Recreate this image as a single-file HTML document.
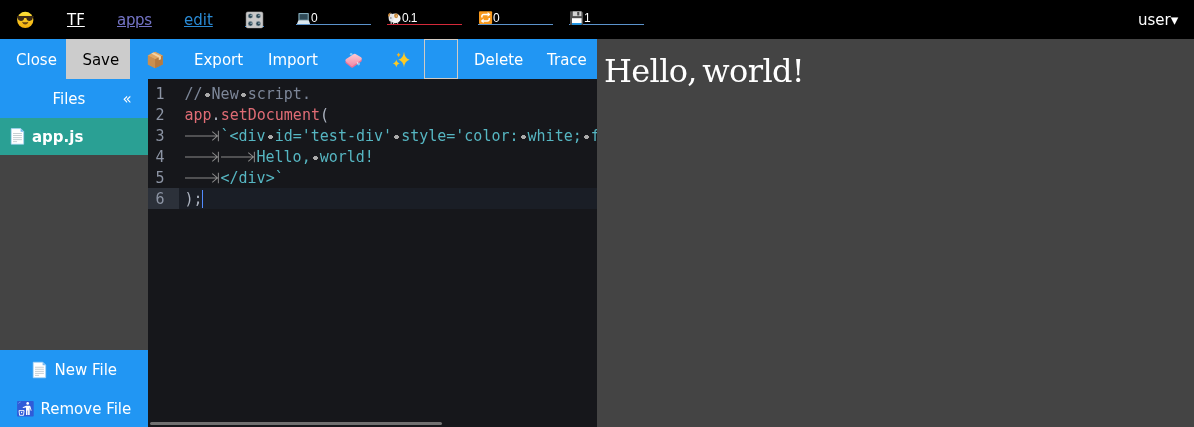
<!DOCTYPE html>
<html><head><meta charset="utf-8">
<style>
html,body{margin:0;padding:0;}
html{background:#000;}
body{will-change:transform;width:1194px;height:427px;overflow:hidden;background:#000;position:relative;font-family:"DejaVu Sans","Liberation Sans",sans-serif;font-size:15px;line-height:22.5px;color:#fff;}
.abs{position:absolute;}
svg{position:absolute;overflow:visible;}
#top{left:0;top:0;width:1194px;height:39px;background:#000;}
#top .t{position:absolute;top:9px;white-space:nowrap;}
#top .s{position:absolute;top:11px;height:13px;width:75px;border-bottom:1px solid #5b93cc;font-family:"Liberation Sans",sans-serif;font-size:12px;line-height:14px;letter-spacing:-0.6px;}
#top .s span{position:absolute;top:0;}
#tool{left:0;top:39px;width:597px;height:40px;background:#2196F3;}
#tool .b{position:absolute;top:3px;height:37px;line-height:37px;white-space:nowrap;}
#right{left:597px;top:39px;width:597px;height:388px;background:#444;}
#hello{position:absolute;left:7px;top:12px;font-family:"DejaVu Serif","Liberation Serif",serif;font-size:32px;letter-spacing:-0.65px;word-spacing:-4px;line-height:40px;color:#fff;white-space:nowrap;}
#side{left:0;top:79px;width:148px;height:348px;background:#444;}
#ed{left:148px;top:79px;width:449px;height:348px;background:#16171b;overflow:hidden;font-family:"DejaVu Sans Mono","Liberation Mono",monospace;font-size:15px;line-height:21px;}
.ln{position:absolute;left:0;height:21px;width:449px;white-space:pre;}
.num{position:absolute;left:7.5px;top:1px;color:#8c94a4;}
.code{position:absolute;left:36.5px;top:1px;}
.ws{background-image:radial-gradient(circle at 50% 55%,#aaa 20%,transparent 5%);background-position:center;}
.tab{display:inline-block;width:36px;height:17.46px;vertical-align:top;margin-top:0.77px;position:relative;}
.tab svg{left:0;top:0;overflow:hidden;}
.c-com{color:#7d8799;}
.c-red{color:#e06c75;}
.c-str{color:#56b6c2;}
.c-pun{color:#abb2bf;}
</style></head><body>
<div id="top" class="abs">
 <span class="t" style="left:67px;text-decoration:underline;">TF</span>
 <span class="t" style="left:117px;text-decoration:underline;color:#7474c6;letter-spacing:-0.3px;">apps</span>
 <span class="t" style="left:184px;text-decoration:underline;color:#2a8ad4;">edit</span>
 <div class="abs" style="left:245px;top:26px;width:19px;height:1px;background:#2389e0;"></div>
 <div class="s" style="left:296px;"><span style="left:15px;">0</span></div>
 <div class="s" style="left:387px;border-bottom-color:#d42a3a;"><span style="left:15px;">0.1</span></div>
 <div class="s" style="left:478px;"><span style="left:15px;">0</span></div>
 <div class="s" style="left:569px;"><span style="left:15px;">1</span></div>
 <span class="t" style="left:1138px;">user▾</span>
</div>
<div id="tool" class="abs">
 <span class="b" style="left:16px;">Close</span>
 <span class="abs" style="left:66px;top:0;width:64px;height:40px;background:#ccc;"></span>
 <span class="b" style="left:82.4px;color:#000;">Save</span>
 <span class="b" style="left:194px;">Export</span>
 <span class="b" style="left:268px;">Import</span>
 <span class="abs" style="left:424px;top:0;width:32px;height:38px;border:1px solid #d2cbc4;"></span>
 <span class="b" style="left:474px;">Delete</span>
 <span class="b" style="left:547px;">Trace</span>
</div>
<div id="right" class="abs"><div id="hello">Hello, world!</div></div>
<div id="side" class="abs">
 <div class="abs" style="left:0;top:0;width:148px;height:39px;background:#2196F3;"><span class="abs" style="left:52.5px;top:9px;">Files</span><span class="abs" style="left:122.5px;top:9px;">«</span></div>
 <div class="abs" style="left:0;top:39px;width:148px;height:37px;background:#2aa094;font-weight:bold;"><span class="abs" style="left:32px;top:8px;">app.js</span></div>
 <div class="abs" style="left:0;top:271px;width:148px;height:77px;background:#2196F3;">
  <span class="abs" style="left:54.5px;top:9px;">New File</span>
  <span class="abs" style="left:40.5px;top:48px;">Remove File</span>
 </div>
</div>
<div id="ed" class="abs">
 <div class="abs" style="left:0;top:109px;width:31px;height:21px;background:#2c313a;"></div>
 <div class="abs" style="left:31px;top:109px;width:418px;height:21px;background:#1a1e26;"></div>
 <div class="ln" style="top:4px;"><span class="num">1</span><span class="code c-com">//<span class="ws"> </span>New<span class="ws"> </span>script.</span></div>
 <div class="ln" style="top:25px;"><span class="num">2</span><span class="code"><span class="c-red">app</span><span class="c-pun">.</span><span class="c-red">setDocument</span><span class="c-pun">(</span></span></div>
 <div class="ln" style="top:46px;"><span class="num">3</span><span class="code c-str"><span class="tab"><svg width="36" height="17.46" viewBox="158.76 0 41.24 20"><path transform="translate(0 0.3)" stroke="#8a8a8a" stroke-width="1.15" fill="none" d="M1 10H196L190 5M190 15L196 10M197 4L197 16"/></svg></span>`&lt;div<span class="ws"> </span>id='test-div'<span class="ws"> </span>style='color:<span class="ws"> </span>white;<span class="ws"> </span>font-size:</span></div>
 <div class="ln" style="top:67px;"><span class="num">4</span><span class="code c-str"><span class="tab"><svg width="36" height="17.46" viewBox="158.76 0 41.24 20"><path transform="translate(0 0.3)" stroke="#8a8a8a" stroke-width="1.15" fill="none" d="M1 10H196L190 5M190 15L196 10M197 4L197 16"/></svg></span><span class="tab"><svg width="36" height="17.46" viewBox="158.76 0 41.24 20"><path transform="translate(0 0.3)" stroke="#8a8a8a" stroke-width="1.15" fill="none" d="M1 10H196L190 5M190 15L196 10M197 4L197 16"/></svg></span>Hello,<span class="ws"> </span>world!</span></div>
 <div class="ln" style="top:88px;"><span class="num">5</span><span class="code c-str"><span class="tab"><svg width="36" height="17.46" viewBox="158.76 0 41.24 20"><path transform="translate(0 0.3)" stroke="#8a8a8a" stroke-width="1.15" fill="none" d="M1 10H196L190 5M190 15L196 10M197 4L197 16"/></svg></span>&lt;/div&gt;`</span></div>
 <div class="ln" style="top:109px;"><span class="num">6</span><span class="code c-pun">);</span></div>
 <div class="abs" style="left:54px;top:111px;width:1.2px;height:18px;background:#528bff;"></div>
 <div class="abs" style="left:1.5px;top:343px;width:292.5px;height:3px;border-radius:1.5px;background:#717171;"></div>
</div>
<svg id="icons" width="1194" height="427" viewBox="0 0 1194 427" style="left:0;top:0;pointer-events:none;">
<defs><linearGradient id="gy" x1="0" y1="0" x2="0" y2="1"><stop offset="0" stop-color="#fde23a"/><stop offset="1" stop-color="#f5ae0c"/></linearGradient><linearGradient id="gp" x1="0" y1="0" x2="0" y2="1"><stop offset="0" stop-color="#fdc3ce"/><stop offset="1" stop-color="#f493ae"/></linearGradient></defs>
<g><circle cx="25.25" cy="19.9" r="8.15" fill="url(#gy)"/><path d="M16.9 16.1H33.6V17.6L32.7 17.8C32.7 19.6 31.8 20.9 29.6 20.9C27.6 20.9 26.6 19.6 26.3 17.9H24.2C23.9 19.6 22.9 20.9 20.9 20.9C18.7 20.9 17.8 19.6 17.8 17.8L16.9 17.6Z" fill="#3b2a18"/><path d="M21.9 21.8Q25.25 22.8 28.6 21.8Q27.6 24.5 25.25 24.5Q22.9 24.5 21.9 21.8Z" fill="#6b4512"/></g>
<g><rect x="246.1" y="11.9" width="16.8" height="16" rx="1.6" fill="#c9c9c9" stroke="#aeaeae" stroke-width="0.5"/>
<circle cx="250.4" cy="16" r="2.35" fill="#2c4856" stroke="#aab3b6" stroke-width="0.5"/><circle cx="251.1" cy="15.5" r="0.8" fill="#9fb6bf"/>
<circle cx="258.3" cy="16" r="2.35" fill="#2c4856" stroke="#aab3b6" stroke-width="0.5"/><circle cx="259.0" cy="15.5" r="0.8" fill="#9fb6bf"/>
<circle cx="250.4" cy="23.7" r="2.35" fill="#2c4856" stroke="#aab3b6" stroke-width="0.5"/><circle cx="251.1" cy="23.2" r="0.8" fill="#9fb6bf"/>
<circle cx="258.3" cy="23.7" r="2.35" fill="#2c4856" stroke="#aab3b6" stroke-width="0.5"/><circle cx="259.0" cy="23.2" r="0.8" fill="#9fb6bf"/>
</g>
<g><rect x="298.4" y="13.1" width="10.4" height="7.3" rx="0.6" fill="#86aebd"/><rect x="299.5" y="14.1" width="8.2" height="5.6" fill="#2f4a57"/><path d="M298.4 20.3H308.8L310.1 24H296.9Z" fill="#d9e7ef"/></g>
<g><ellipse cx="395.2" cy="18.4" rx="5.4" ry="4.9" fill="#f4f4f4"/><ellipse cx="391.2" cy="17.6" rx="2.6" ry="4.2" fill="#e4e4e6"/><rect x="390.6" y="22" width="1.2" height="1.9" fill="#cfcfcf"/><rect x="393" y="22.3" width="1.2" height="1.7" fill="#cfcfcf"/><rect x="397" y="22" width="1.2" height="1.7" fill="#cfcfcf"/><ellipse cx="396.1" cy="15.8" rx="2" ry="2.4" fill="#c98a3d"/><ellipse cx="396.4" cy="16" rx="0.8" ry="1" fill="#e6b872"/><path d="M388 16.5Q387.8 13 391 12.6Q389.6 14 389.6 16.5Z" fill="#c98a3d"/><rect x="390" y="17.3" width="1.6" height="1.4" fill="#8d8d92"/></g>
<g><rect x="479" y="11.2" width="13.1" height="12.9" rx="1" fill="#f8991d"/><path d="M481.9 17.4V16.2A1.8 1.8 0 0 1 483.7 14.4H488" fill="none" stroke="#fff" stroke-width="1.5"/><path d="M487.6 12.1L490.5 14.4L487.6 16.7Z" fill="#fff"/><path d="M489.3 17.9V19.1A1.8 1.8 0 0 1 487.5 20.9H483.2" fill="none" stroke="#fff" stroke-width="1.5"/><path d="M483.6 18.6L480.7 20.9L483.6 23.2Z" fill="#fff"/></g>
<g><path d="M570.6 11.2H581.6L583.1 12.7V24.9H570V11.8Q570 11.2 570.6 11.2Z" fill="#4e4e4e"/><rect x="572.8" y="11.4" width="8.6" height="4.7" fill="#d2d2d2"/><rect x="577.2" y="12" width="2.1" height="3.5" fill="#4a4a4a"/><rect x="572" y="18.2" width="9.6" height="4.9" fill="#fff"/><rect x="572" y="23" width="9.6" height="1.9" fill="#1e96e6"/></g>
<g><path d="M155.1 52L162.6 55.5V64.5L155.1 68L148 64.5V55.5Z" fill="#c98f50"/><path d="M155.1 51.8L162.8 55.4L155.1 59.2L147.8 55.4Z" fill="#dfa663"/><path d="M147.8 55.4L155.1 59.2V68.2L147.8 64.6Z" fill="#c98f50"/><path d="M162.8 55.4L155.1 59.2V68.2L162.8 64.6Z" fill="#b67a3f"/><path d="M151.2 53.6L153.3 52.6L160.9 56.3V59.2L158.8 60.2V57.4Z" fill="#f1d3a6"/></g>
<g stroke-linejoin="round" stroke-width="3.2"><path d="M347 62L354.7 56.9L360.2 60.4L352 66.1Z" fill="#ea7399" stroke="#ea7399"/><path d="M347 60.3L354.7 55.3L360.2 58.7L352 64.5Z" fill="url(#gp)" stroke="url(#gp)"/></g><circle cx="351.2" cy="54.2" r="1.3" fill="#9fd6f7" opacity=".8"/><circle cx="358.6" cy="64" r="1.4" fill="#9fd6f7" opacity=".8"/><circle cx="357.4" cy="62.9" r="0.6" fill="#fff"/>
<g fill="#fcca25"><path d="M404 51.800000000000004 Q404.784 58.594 409.6 59.7 Q404.784 60.806000000000004 404 67.60000000000001 Q403.216 60.806000000000004 398.4 59.7 Q403.216 58.594 404 51.800000000000004Z"/><path d="M396.3 59.6 Q396.86 62.876 399.8 63.5 Q396.86 64.124 396.3 67.4 Q395.74 64.124 392.8 63.5 Q395.74 62.876 396.3 59.6Z"/><path d="M398.6 52.4 Q399.1 54.199999999999996 400.6 54.8 Q399.1 55.4 398.6 57.199999999999996 Q398.1 55.4 396.6 54.8 Q398.1 54.199999999999996 398.6 52.4Z" fill="#f7b31c"/></g>
<g transform="translate(10.9 128.3)"><path d="M0.3 0.3H9.899999999999999L12.799999999999999 3.2V15.899999999999999H0.3Z" fill="#fff" stroke="#9fd0f7" stroke-width="0.7"/><path d="M9.7 0.3L12.799999999999999 3.4H9.7Z" fill="#74b8f0"/><rect x="2.1" y="4.8999999999999995" width="8.9" height="0.8" fill="#b9c3c9"/><rect x="2.1" y="6.8999999999999995" width="8.9" height="0.8" fill="#b9c3c9"/><rect x="2.1" y="9.0" width="8.9" height="0.8" fill="#b9c3c9"/><rect x="2.1" y="11.0" width="8.9" height="0.8" fill="#b9c3c9"/><rect x="2.1" y="13.0" width="4.1" height="0.8" fill="#b9c3c9"/></g>
<g transform="translate(32.9 361.9)"><path d="M0.3 0.3H9.899999999999999L12.799999999999999 3.2V15.899999999999999H0.3Z" fill="#fff" stroke="#9fd0f7" stroke-width="0.7"/><path d="M9.7 0.3L12.799999999999999 3.4H9.7Z" fill="#74b8f0"/><rect x="2.1" y="4.8999999999999995" width="8.9" height="0.8" fill="#b9c3c9"/><rect x="2.1" y="6.8999999999999995" width="8.9" height="0.8" fill="#b9c3c9"/><rect x="2.1" y="9.0" width="8.9" height="0.8" fill="#b9c3c9"/><rect x="2.1" y="11.0" width="8.9" height="0.8" fill="#b9c3c9"/><rect x="2.1" y="13.0" width="4.1" height="0.8" fill="#b9c3c9"/></g>
<g><rect x="17.1" y="401" width="16.6" height="15.6" rx="0.8" fill="#2f5bd8"/><circle cx="27.7" cy="403.4" r="1.35" fill="#fff"/><path d="M26 405.7H29.6Q30.2 405.7 30.4 406.4L31.6 410.6L30.9 410.9L29.7 407.6V415H28.1V410.6H27.5V415H26V407.4L22.9 408L22.7 407.2L26 405.7Z" fill="#fff"/><path d="M19 410.6H24.1L23.5 415.3H19.6Z" fill="none" stroke="#fff" stroke-width="0.9"/><rect x="21" y="411.8" width="1.2" height="1.4" fill="#fff"/><path d="M18.3 403.6Q19 402.3 20.6 402" fill="none" stroke="#7fa5ee" stroke-width="0.8"/></g>
</svg>
</body></html>
